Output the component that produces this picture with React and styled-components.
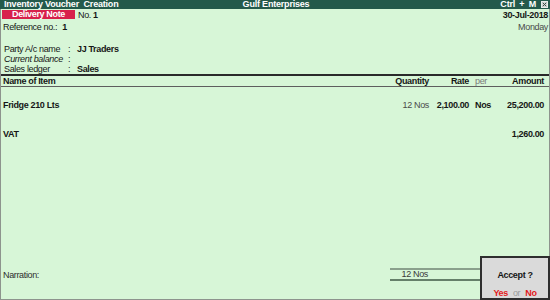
import React from 'react';
import styled, { createGlobalStyle } from 'styled-components';

const GlobalStyle = createGlobalStyle`
    html, body {
        margin: 0;
        padding: 0;
    }
    body {
        font-family: "Liberation Sans", Arial, sans-serif;
        font-size: 9px;
        letter-spacing: -0.35px;
        color: #161616;
        background: #d7f6d7;
    }
`

const Page = styled.div`
    position: relative;
    width: 550px;
    height: 300px;
    display: flex;
    flex-direction: column;
    background: #d7f6d7;
    overflow: hidden;
`

const TitleBar = styled.div`
    height: 9px;
    display: grid;
    grid-template-columns: 1fr auto 1fr;
    align-items: center;
    padding: 0 2px 0 4px;
    background: #245a4b;
    color: #ffffff;
    font-weight: bold;
    line-height: 9px;
    letter-spacing: -0.2px;
`

const TitleRight = styled.div`
    display: flex;
    justify-content: flex-end;
    align-items: center;
    gap: 5px;
    word-spacing: 2px;
`

const Body = styled.div`
    flex: 1;
    display: flex;
    flex-direction: column;
    border-left: 1px solid #8d948d;
    border-right: 1px solid #8d948d;
    border-bottom: 1px solid #8d948d;
`

const TopInfo = styled.div`
    height: 65px;
    padding: 1px 1px 0 1px;
    box-sizing: border-box;
`

const InfoRow = styled.div`
    display: flex;
    align-items: center;
    height: ${p => p.h || 10}px;
    line-height: 10px;
    margin-top: ${p => p.mt || 0}px;
    padding-left: ${p => p.pl || 0}px;
`

const VoucherBadge = styled.div`
    width: 73px;
    height: 9px;
    line-height: 9px;
    background: #d8214c;
    color: #fff;
    font-weight: bold;
    text-align: center;
`

const Push = styled.div`
    flex: 1;
`

const Bold = styled.span`
    font-weight: bold;
    margin-left: ${p => p.ml || 0}px;
`

const Muted = styled.span`
    color: #4a4a4a;
`

const PartyGrid = styled.div`
    display: grid;
    grid-template-columns: 64px 9px auto;
    grid-auto-rows: 10px;
    line-height: 10px;
    margin-top: 12px;
    padding-left: 2px;
    white-space: nowrap;
`

const Label = styled.div`
    font-style: ${p => (p.italic ? 'italic' : 'normal')};
`

const Value = styled.div`
    font-weight: bold;
`

const ItemGrid = styled.div`
    display: grid;
    grid-template-columns: 1fr 68px 40px 30px 45px;
    padding: 0 5px 0 2px;
    align-items: center;
`

const HeadRow = styled(ItemGrid)`
    height: 10px;
    line-height: 10px;
    border-top: 2px solid #2a2a2a;
    border-bottom: 1px solid #5e5e5e;
    font-weight: bold;
`

const ItemRow = styled(ItemGrid)`
    height: 11px;
    line-height: 11px;
    margin-top: ${p => p.mt}px;
`

const Cell = styled.div`
    text-align: ${p => p.align || 'left'};
    font-weight: ${p => (p.bold ? 'bold' : p.light ? 'normal' : 'inherit')};
    color: ${p => p.color || 'inherit'};
    padding-left: ${p => p.pl || 0}px;
    white-space: nowrap;
`

const Spacer = styled.div`
    flex: 1;
`

const FooterRow = styled(ItemGrid)`
    margin-bottom: 18px;
`

const TotalCell = styled.div`
    grid-column: 2 / 6;
    margin-left: 29px;
    height: 9px;
    line-height: 9px;
    border-top: 2px solid #8aa08c;
    border-bottom: 2px solid #65806a;
    color: #3a3a3a;
`

const TotalQty = styled.div`
    width: 38px;
    text-align: right;
`

const AcceptBox = styled.div`
    position: absolute;
    right: 0;
    bottom: 0;
    width: 70px;
    height: 44px;
    box-sizing: border-box;
    border: 2px solid #2e2e2e;
    background: #dadada;
    display: flex;
    flex-direction: column;
    align-items: center;
    justify-content: space-between;
    padding: 12px 0 0;
    line-height: 10px;
    font-weight: bold;
`

const Choices = styled.div`
    display: flex;
    gap: 5px;
    color: #e31b1b;
`

const Or = styled.span`
    color: #9a9a9a;
    font-weight: normal;
`

function CloseIcon() {
    return (
        <svg width="7" height="7" viewBox="0 0 7 7">
            <rect x="0.5" y="0.5" width="6" height="6" fill="#cfd6d2" stroke="#e8ece9" />
            <path d="M1.8 1.8 L5.2 5.2 M5.2 1.8 L1.8 5.2" stroke="#3a4a44" strokeWidth="1" />
        </svg>
    );
}

export default function App() {
    return (
        <>
            <GlobalStyle />
            <Page>
                <TitleBar>
                    <div>Inventory Voucher&nbsp; Creation</div>
                    <div>Gulf Enterprises</div>
                    <TitleRight>
                        <span>Ctrl + M</span>
                        <CloseIcon />
                    </TitleRight>
                </TitleBar>
                <Body>
                    <TopInfo>
                        <InfoRow h={9}>
                            <VoucherBadge>Delivery Note</VoucherBadge>
                            <span style={{ marginLeft: 3 }}>
                                No. <Bold>1</Bold>
                            </span>
                            <Push />
                            <Bold>30-Jul-2018</Bold>
                        </InfoRow>
                        <InfoRow mt={3} pl={1}>
                            <span>Reference no.:</span>
                            <Bold ml={5}>1</Bold>
                            <Push />
                            <Muted>Monday</Muted>
                        </InfoRow>
                        <PartyGrid>
                            <Label>Party A/c name</Label>
                            <div>:</div>
                            <Value>JJ Traders</Value>
                            <Label italic>Current balance</Label>
                            <div>:</div>
                            <Value />
                            <Label>Sales ledger</Label>
                            <div>:</div>
                            <Value>Sales</Value>
                        </PartyGrid>
                    </TopInfo>

                    <HeadRow>
                        <Cell>Name of Item</Cell>
                        <Cell align="right">Quantity</Cell>
                        <Cell align="right">Rate</Cell>
                        <Cell pl={6} light color="#7a7a7a">per</Cell>
                        <Cell align="right">Amount</Cell>
                    </HeadRow>

                    <ItemRow mt={13}>
                        <Cell bold>Fridge 210 Lts</Cell>
                        <Cell align="right" color="#4a4a4a">12 Nos</Cell>
                        <Cell align="right" bold>2,100.00</Cell>
                        <Cell pl={6} bold>Nos</Cell>
                        <Cell align="right" bold>25,200.00</Cell>
                    </ItemRow>
                    <ItemRow mt={18}>
                        <Cell bold>VAT</Cell>
                        <Cell />
                        <Cell />
                        <Cell />
                        <Cell align="right" bold>1,260.00</Cell>
                    </ItemRow>

                    <Spacer />

                    <FooterRow>
                        <Cell color="#2e2e2e">Narration:</Cell>
                        <TotalCell>
                            <TotalQty>12 Nos</TotalQty>
                        </TotalCell>
                    </FooterRow>
                </Body>

                <AcceptBox>
                    <div>Accept ?</div>
                    <Choices>
                        <span>Yes</span>
                        <Or>or</Or>
                        <span>No</span>
                    </Choices>
                </AcceptBox>
            </Page>
        </>
    );
}
